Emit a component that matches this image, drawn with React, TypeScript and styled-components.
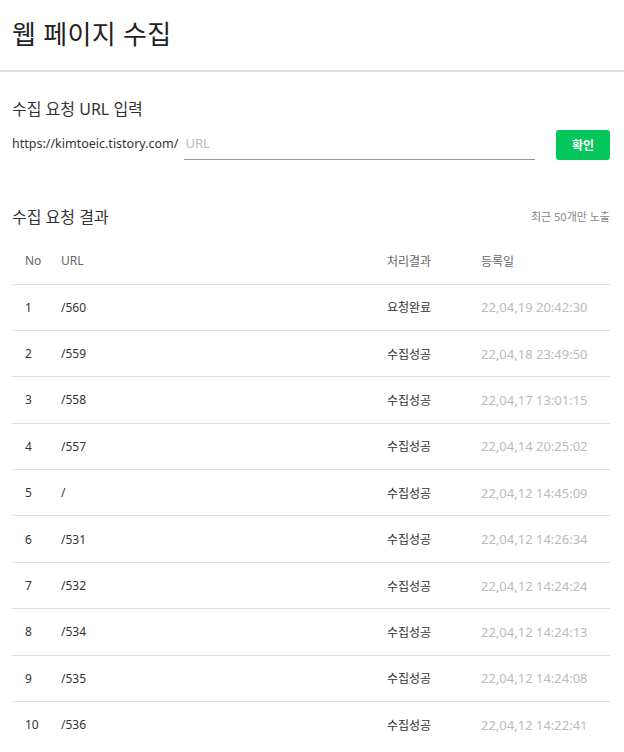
import React from "react";
import styled, { createGlobalStyle } from "styled-components";

const GlobalStyle = createGlobalStyle`
  html, body { margin: 0; padding: 0; background: #fff; }
  body { font-family: "Noto Sans", "Noto Sans CJK KR", sans-serif; color: #333; }
  * { box-sizing: border-box; }
`;

const Page = styled.div`
  width: 624px;
`;

const Header = styled.header`
  height: 72px;
  border-bottom: 2px solid #e0e0e0;
  display: flex;
  align-items: center;
  padding: 0 12px 4px;
`;

const Title = styled.h1`
  margin: 0;
  font-size: 26px;
  font-weight: 400;
  color: #222;
  letter-spacing: 0.3px;
`;

const Section = styled.section`
  padding: 0 14px 0 12px;
`;

const SectionHead = styled.div<{ $top: number }>`
  display: flex;
  justify-content: space-between;
  align-items: center;
  height: 28px;
  margin-top: ${(p) => p.$top}px;
`;

const SectionTitle = styled.h2`
  margin: 0;
  font-size: 16px;
  font-weight: 400;
  color: #333;
`;

const Note = styled.span`
  font-size: 11px;
  color: #888;
`;

const InputRow = styled.div`
  display: flex;
  align-items: center;
  height: 30px;
  margin-top: 8px;
`;

const Prefix = styled.span`
  font-size: 12.5px;
  color: #333;
  margin: 0 6px 4px 0;
`;

const UrlInput = styled.input`
  width: 351px;
  height: 30px;
  border: none;
  border-bottom: 1px solid #999;
  outline: none;
  font-family: inherit;
  font-size: 13px;
  padding: 0 1px 4px;
  color: #333;
  &::placeholder { color: #bbb; }
`;

const ConfirmButton = styled.button`
  margin-left: auto;
  width: 54px;
  height: 30px;
  border: none;
  border-radius: 3px;
  background: #03c75a;
  color: #fff;
  font-family: inherit;
  font-size: 12px;
  font-weight: 700;
  cursor: pointer;
`;

const Table = styled.table`
  width: 100%;
  border-collapse: collapse;
  margin-top: 8px;
  font-size: 12px;
`;

const Th = styled.th<{ $w?: number; $pl?: number }>`
  text-align: left;
  font-weight: 400;
  color: #666;
  height: 46px;
  padding: 0 0 0 ${(p) => p.$pl ?? 0}px;
  width: ${(p) => (p.$w ? `${p.$w}px` : "auto")};
  border-bottom: 1px solid #e0e0e0;
`;

const Tr = styled.tr`
  height: 46.4px;
  border-bottom: 1px solid #e0e0e0;
  &:last-child { border-bottom: none; }
`;

const Td = styled.td<{ $pl?: number; $muted?: boolean }>`
  padding: 0 0 0 ${(p) => p.$pl ?? 0}px;
  color: ${(p) => (p.$muted ? "#bbb" : "#333")};
  font-size: ${(p) => (p.$muted ? "13px" : "12px")};
`;

const rows: [string, string, string][] = [
  ["/560", "요청완료", "22,04,19 20:42:30"],
  ["/559", "수집성공", "22,04,18 23:49:50"],
  ["/558", "수집성공", "22,04,17 13:01:15"],
  ["/557", "수집성공", "22,04,14 20:25:02"],
  ["/", "수집성공", "22,04,12 14:45:09"],
  ["/531", "수집성공", "22,04,12 14:26:34"],
  ["/532", "수집성공", "22,04,12 14:24:24"],
  ["/534", "수집성공", "22,04,12 14:24:13"],
  ["/535", "수집성공", "22,04,12 14:24:08"],
  ["/536", "수집성공", "22,04,12 14:22:41"],
];

export default function App() {
  return (
    <Page>
      <GlobalStyle />
      <Header>
        <Title>웹 페이지 수집</Title>
      </Header>
      <Section>
        <SectionHead $top={22}>
          <SectionTitle>수집 요청 URL 입력</SectionTitle>
        </SectionHead>
        <InputRow>
          <Prefix>https://kimtoeic.tistory.com/</Prefix>
          <UrlInput placeholder="URL" />
          <ConfirmButton>확인</ConfirmButton>
        </InputRow>
        <SectionHead $top={42}>
          <SectionTitle>수집 요청 결과</SectionTitle>
          <Note>최근 50개만 노출</Note>
        </SectionHead>
        <Table>
          <thead>
            <tr>
              <Th $w={49} $pl={13}>No</Th>
              <Th>URL</Th>
              <Th $w={94}>처리결과</Th>
              <Th $w={129}>등록일</Th>
            </tr>
          </thead>
          <tbody>
            {rows.map(([url, status, date], i) => (
              <Tr key={i}>
                <Td $pl={13}>{i + 1}</Td>
                <Td>{url}</Td>
                <Td>{status}</Td>
                <Td $muted>{date}</Td>
              </Tr>
            ))}
          </tbody>
        </Table>
      </Section>
    </Page>
  );
}
